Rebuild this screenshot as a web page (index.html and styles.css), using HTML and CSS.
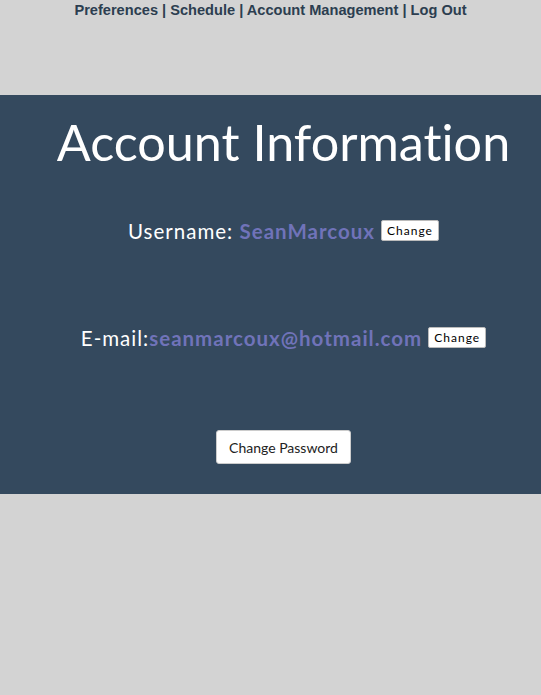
FILE: index.html
```html
<!DOCTYPE html>
<html>
<head>
<meta charset="utf-8">
<link rel="stylesheet" href="styles.css">
</head>
<body>
<nav class="nav">
  <a href="#">Preferences</a> | <a href="#">Schedule</a> | <a href="#">Account Management</a> | <a href="#">Log Out</a>
</nav>
<main class="panel">
  <h1 class="title">Account Information</h1>
  <div class="row row-user">
    <span class="label">Username: </span><span class="value">SeanMarcoux</span>
    <button class="small-btn">Change</button>
  </div>
  <div class="row row-mail">
    <span class="label">E-mail:</span><span class="value">seanmarcoux@hotmail.com</span>
    <button class="small-btn">Change</button>
  </div>
  <div class="row row-pass">
    <button class="big-btn">Change Password</button>
  </div>
</main>
</body>
</html>
```
FILE: styles.css
```css
html, body {
  margin: 0;
  padding: 0;
  background: #d3d3d3;
}
body {
  font-family: Lato, "Liberation Sans", sans-serif;
  font-variant-ligatures: none;
  height: 695px;
}
.nav {
  text-align: center;
  font-family: "Liberation Sans", Arial, sans-serif;
  font-weight: bold;
  font-size: 14.6px;
  color: #2c3e50;
  padding-top: 2px;
  height: 95px;
  box-sizing: border-box;
}
.nav a {
  color: #2c3e50;
  text-decoration: none;
}
.panel {
  background: #34495e;
  height: 399px;
  box-sizing: border-box;
  padding-left: 26px;
  padding-top: 12px;
  text-align: center;
  color: #ffffff;
}
.title {
  margin: 0;
  font-weight: 400;
  font-size: 50.3px;
  line-height: 70px;
}
.row {
  text-align: center;
  white-space: nowrap;
}
.row-user {
  margin-top: 39px;
  height: 26px;
  line-height: 26px;
}
.row-mail {
  margin-top: 81px;
  height: 26px;
  line-height: 26px;
}
.row-pass {
  margin-top: 81px;
}
.label {
  font-size: 20.5px;
  letter-spacing: 1px;
  vertical-align: middle;
}
.value {
  font-size: 20.5px;
  font-weight: bold;
  color: #7073b9;
  letter-spacing: 1px;
  vertical-align: middle;
}
.small-btn {
  font-family: Lato, sans-serif;
  font-size: 12px;
  letter-spacing: 1px;
  background: #fff;
  color: #000;
  border: 1px solid #bbb;
  border-radius: 2px;
  padding: 2px 5px;
  margin-left: 2px;
  height: 21px;
  line-height: 15px;
  vertical-align: middle;
}
.big-btn {
  font-family: Lato, sans-serif;
  font-size: 14px;
  background: #fff;
  color: #222;
  border: 1px solid #ccc;
  border-radius: 3px;
  padding: 0 12px;
  height: 34px;
}
```
